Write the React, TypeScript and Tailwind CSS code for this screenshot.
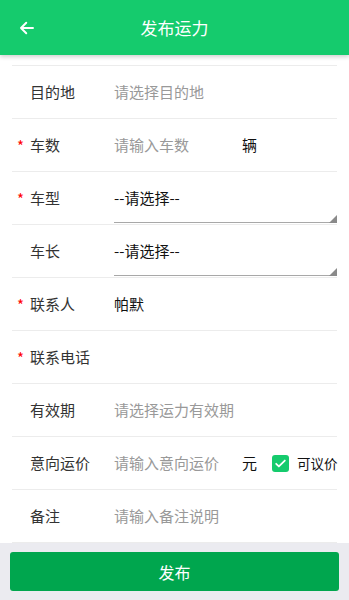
import React from "react";

const font = { fontFamily: '"Noto Sans CJK SC", "Noto Sans", sans-serif' };

function Star({ on }: { on?: boolean }) {
  return (
    <span className="w-[18px] shrink-0 pl-[5px] text-[15px] leading-none text-[#f00]">
      {on ? "*" : ""}
    </span>
  );
}

function Row({
  star,
  label,
  children,
}: {
  star?: boolean;
  label: string;
  children?: React.ReactNode;
}) {
  return (
    <div className="mx-3 flex h-[53px] items-center border-b border-[#ececec]">
      <Star on={star} />
      <span className="w-[84px] shrink-0 text-[15px] text-[#333]">{label}</span>
      {children}
    </div>
  );
}

function Select() {
  return (
    <div className="relative flex h-full flex-1 items-center">
      <span className="text-[15px] text-[#111]">--请选择--</span>
      <div className="absolute bottom-[1px] left-0 right-0 h-[1px] bg-[#a8a8a8]" />
      <svg className="absolute bottom-[1px] right-0" width="8" height="8" viewBox="0 0 8 8">
        <path d="M8 0 L8 8 L0 8 Z" fill="#8a8a8a" />
      </svg>
    </div>
  );
}

export default function App() {
  return (
    <div className="flex h-[600px] w-[349px] flex-col bg-white" style={font}>
      <div className="relative z-10 flex h-[55px] shrink-0 items-center bg-[#15cb6d] shadow-[0_2px_4px_rgba(0,0,0,0.18)]">
        <svg className="absolute left-[18px]" width="18" height="18" viewBox="0 0 24 24" fill="none" stroke="white" strokeWidth="2.6" strokeLinecap="round" strokeLinejoin="round">
          <path d="M20 12H4M11 5l-7 7 7 7" />
        </svg>
        <span className="w-full text-center text-[17px] text-white">发布运力</span>
      </div>

      <div className="flex-1">
        <div className="mx-3 h-[11px] border-b border-[#ececec]" />
        <Row label="目的地">
          <span className="text-[15px] text-[#999]">请选择目的地</span>
        </Row>
        <Row star label="车数">
          <span className="w-[128px] shrink-0 text-[15px] text-[#999]">请输入车数</span>
          <span className="text-[15px] text-[#111]">辆</span>
        </Row>
        <Row star label="车型">
          <Select />
        </Row>
        <Row label="车长">
          <Select />
        </Row>
        <Row star label="联系人">
          <span className="text-[15px] text-[#111]">帕默</span>
        </Row>
        <Row star label="联系电话">
          <span className="text-[15px] text-[#111]"></span>
        </Row>
        <Row label="有效期">
          <span className="text-[15px] text-[#999]">请选择运力有效期</span>
        </Row>
        <Row label="意向运价">
          <span className="w-[128px] shrink-0 whitespace-nowrap text-[15px] text-[#999]">请输入意向运价</span>
          <span className="w-[30px] shrink-0 text-[15px] text-[#111]">元</span>
          <span className="flex h-[17px] w-[17px] shrink-0 items-center justify-center rounded-[3px] bg-[#15cb6d]">
            <svg width="13" height="13" viewBox="0 0 24 24" fill="none" stroke="white" strokeWidth="3.2" strokeLinecap="round" strokeLinejoin="round">
              <path d="M4 12.5l5 5L20 6.5" />
            </svg>
          </span>
          <span className="ml-[8px] whitespace-nowrap text-[13.5px] text-[#111]">可议价</span>
        </Row>
        <Row label="备注">
          <span className="text-[15px] text-[#999]">请输入备注说明</span>
        </Row>
      </div>

      <div className="flex h-[59px] shrink-0 items-start bg-[#ebebf0] px-[10px] pt-[9px]">
        <button className="h-[39px] w-full rounded-[3px] bg-[#00a64e] text-[16px] text-white">发布</button>
      </div>
    </div>
  );
}
